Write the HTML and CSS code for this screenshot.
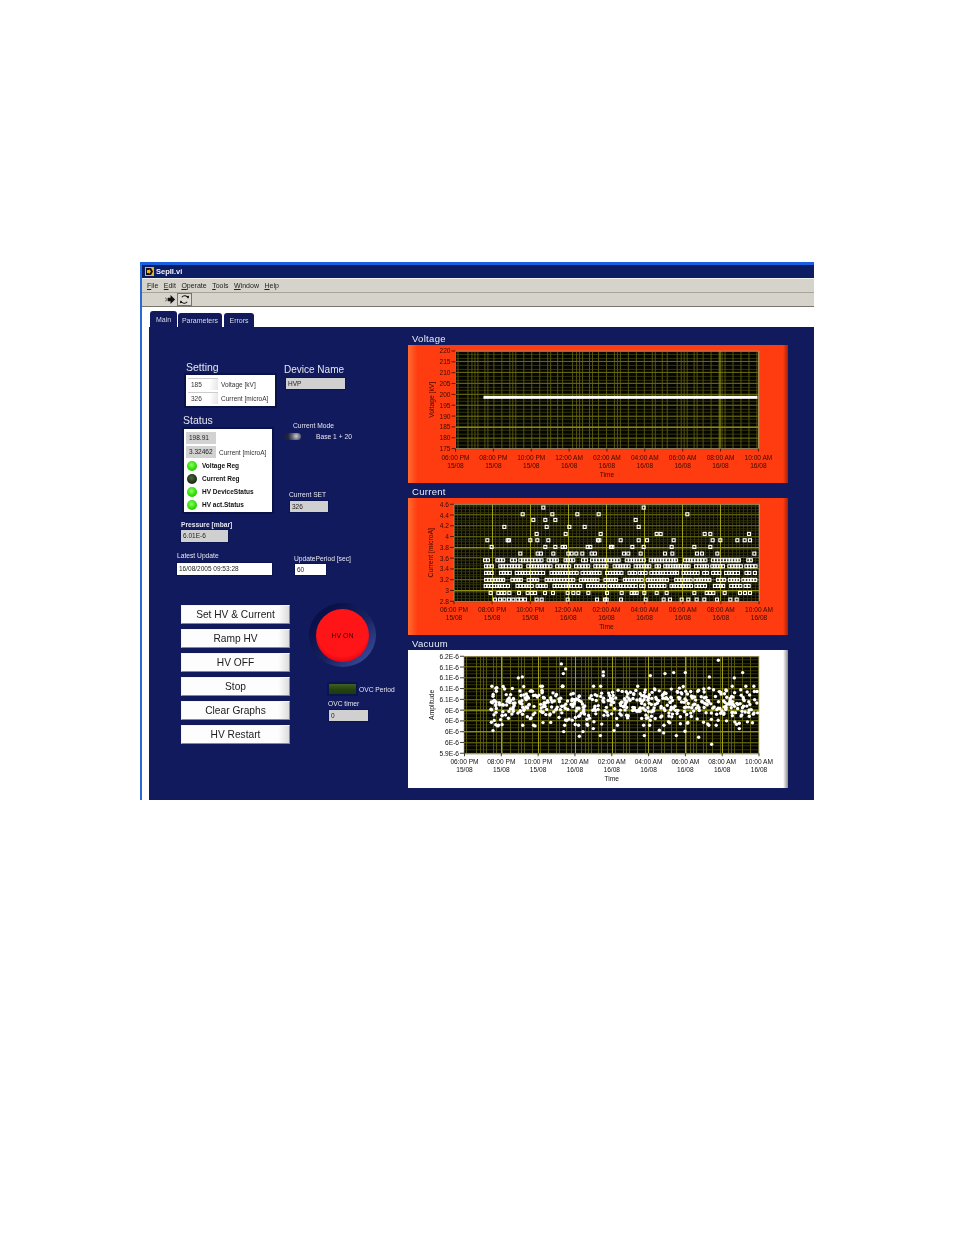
FILE: index.html
```html
<!DOCTYPE html>
<html lang="en">
<head>
<meta charset="utf-8">
<title>SepII.vi</title>
<link rel="stylesheet" href="styles.css">
</head>
<body>
<div class="window">
  <div class="titlebar">
    <svg class="app-icon" viewBox="0 0 9 9"><rect width="9" height="9" fill="#f4b020"/><path d="M1 1h5l2 3.500-2 3.500H1z" fill="#111"/><path d="M2 3h2v-1l2 2.500-2 2.500v-1H2z" fill="#f4b020"/></svg>
    <span>SepII.vi</span>
  </div>
  <div class="menubar">
    <span><u>F</u>ile</span><span><u>E</u>dit</span><span><u>O</u>perate</span><span><u>T</u>ools</span><span><u>W</u>indow</span><span><u>H</u>elp</span>
  </div>
  <div class="toolbar">
    <svg class="tool" viewBox="0 0 12 12"><path d="M3 4h3V1l5 5-5 5V8H3z" fill="#111"/><path d="M0 4.500h1M0 7.500h1M2 4.500v3" stroke="#555" fill="none"/></svg>
    <svg class="tool tool-pressed" viewBox="0 0 12 12"><path d="M3 3.500a4 4 0 0 1 7 1M9 8.500a4 4 0 0 1-7-1" fill="none" stroke="#111" stroke-width="1.100"/><path d="M8 2.500l2.500 2.500.5-3zM4 9.500L1.500 7 1 10z" fill="#111"/></svg>
  </div>
  <div class="tabstrip">
    <div class="tab tab-main">Main</div>
    <div class="tab tab-params">Parameters</div>
    <div class="tab tab-errors">Errors</div>
  </div>
  <div class="panel">
    <div class="controls">
      <div class="upper">
        <div class="col-a">
          <div class="lbl-lg setting-lbl">Setting</div>
          <div class="box setting-box">
            <div class="row"><span class="entry">185</span><span class="cap">Voltage [kV]</span></div>
            <div class="row"><span class="entry">326</span><span class="cap">Current [microA]</span></div>
          </div>
          <div class="lbl-lg status-lbl">Status</div>
          <div class="box status-box">
            <div class="row"><span class="readout">198.91</span></div>
            <div class="row"><span class="readout">3.32462</span><span class="cap">Current [microA]</span></div>
            <div class="led-row"><i class="led on"></i><b>Voltage Reg</b></div>
            <div class="led-row"><i class="led off"></i><b>Current Reg</b></div>
            <div class="led-row"><i class="led on"></i><b>HV DeviceStatus</b></div>
            <div class="led-row"><i class="led on"></i><b>HV act.Status</b></div>
          </div>
          <div class="lbl-sm bold pressure-lbl">Pressure [mbar]</div>
          <div class="field pressure-field">6.01E-6</div>
          <div class="lbl-sm latest-lbl">Latest Update</div>
          <div class="field white latest-field">16/08/2005 09:53:28</div>
        </div>
        <div class="col-b">
          <div class="lbl-lg device-lbl">Device Name</div>
          <div class="field device-field">HVP</div>
          <div class="lbl-sm mode-lbl">Current Mode</div>
          <div class="mode-row">
            <span class="toggle"></span>
            <span class="lbl-sm">Base 1 + 20</span>
          </div>
          <div class="lbl-sm set-lbl">Current SET</div>
          <div class="field set-field">326</div>
          <div class="lbl-sm period-lbl">UpdatePeriod [sec]</div>
          <div class="field white period-field">60</div>
        </div>
      </div>
      <div class="lower">
        <div class="buttons">
          <div class="btn">Set HV &amp; Current</div>
          <div class="btn">Ramp HV</div>
          <div class="btn">HV OFF</div>
          <div class="btn">Stop</div>
          <div class="btn">Clear Graphs</div>
          <div class="btn">HV Restart</div>
        </div>
        <div class="hv-col">
          <div class="hv-ring"><div class="hv-ball">HV ON</div></div>
          <div class="ovc-row"><span class="ovc-led"></span><span class="lbl-sm">OVC Period</span></div>
          <div class="lbl-sm timer-lbl">OVC timer</div>
          <div class="field timer-field">0</div>
        </div>
      </div>
    </div>
    <div class="charts">
      <div class="chart-lbl">Voltage</div>
      <div class="chart orange"><svg id="voltage" viewBox="408 345 380 138"></svg></div>
      <div class="chart-lbl">Current</div>
      <div class="chart orange"><svg id="current" viewBox="408 498 380 137"></svg></div>
      <div class="chart-lbl">Vacuum</div>
      <div class="chart pale"><svg id="vacuum" viewBox="408 650 380 137"></svg></div>
    </div>
  </div>
</div>
<script src="app.js"></script>
</body>
</html>
```
FILE: styles.css
```css
html, body { margin: 0; background: #fff; }
body { height: 1235px; overflow: hidden; font-family: "Liberation Sans", Arial, sans-serif; }

.window {
  box-sizing: border-box;
  margin: 262px 0 0 140px;
  width: 674px;
  height: 538px;
  display: flex;
  flex-direction: column;
  background: #fff;
  border-top: 3px solid #1a5fe0;
  border-left: 2px solid #2a6ad8;
  overflow: hidden;
  filter: blur(.3px);
}

.titlebar {
  height: 13px; flex: none;
  display: flex; align-items: center; gap: 2px;
  padding-left: 3px;
  background: #0d1d63;
  color: #f2f2f8;
  font-size: 7.500px; font-weight: bold;
}
.app-icon { width: 9px; height: 9px; }

.menubar {
  height: 14px; flex: none;
  display: flex; align-items: center; gap: 5.500px;
  padding-left: 5px;
  background: #d6d3cb;
  border-top: 1px solid #f2f0ea;
  box-sizing: border-box;
  color: #222;
  font-size: 7px;
}
.toolbar {
  height: 15px; flex: none;
  display: flex; align-items: center; gap: 1px;
  padding-left: 22px;
  background: #d6d3cb;
  border-top: 1px solid #a8a59c;
  border-bottom: 1px solid #77756d;
  box-sizing: border-box;
}
.tool { width: 11px; height: 11px; padding: 0 1px; }
.tool-pressed { background: #dedbd4; outline: 1px solid #77756d; }

.tabstrip {
  height: 20px; flex: none;
  display: flex; align-items: flex-end;
  padding-left: 7px;
  background: #fff;
  box-sizing: border-box;
}
.tab {
  height: 14px;
  display: flex; align-items: center; justify-content: center;
  background: #101a5c;
  border-radius: 3px 3px 0 0;
  color: #d8d8e8;
  font-size: 7px;
}
.tab-main { width: 27px; height: 16px; margin-left: 1px; }
.tab-params { width: 44px; margin-left: 1px; }
.tab-errors { width: 30px; margin-left: 2px; }

.panel {
  flex: 1;
  margin-left: 7px;
  display: flex;
  background: #101a5c;
  color: #e6e6f0;
}

.controls { width: 259px; flex: none; display: flex; flex-direction: column; }
.upper { display: flex; height: 250px; padding-left: 28px; box-sizing: border-box; }
.col-a { width: 107px; flex: none; display: flex; flex-direction: column; align-items: flex-start; }
.col-b { display: flex; flex-direction: column; align-items: flex-start; }

.lbl-lg { font-size: 10.500px; line-height: 12px; white-space: nowrap; }
.lbl-sm { font-size: 6.700px; line-height: 9px; white-space: nowrap; }
.bold { font-weight: bold; }

.setting-lbl { margin: 34px 0 0 9px; }
.setting-box { margin: 2px 0 0 9px; width: 89px; height: 31px; padding: 2px 0 0 2px; }
.box {
  box-sizing: border-box;
  background: #fff;
  outline: 2px solid #0a1248;
  color: #333;
  font-size: 6.500px;
  display: flex; flex-direction: column;
}
.row { display: flex; align-items: center; gap: 3px; height: 14px; white-space: nowrap; }
.entry {
  width: 30px; height: 12px; line-height: 12px; padding-left: 3px; box-sizing: border-box;
  background: linear-gradient(100deg, #fff 70%, #e4e4e4);
  border-top: 1px solid #ccc;
}
.cap { font-size: 6.500px; color: #333; }

.status-lbl { margin: 8px 0 0 6px; }
.status-box { margin: 3px 0 0 7px; width: 88px; height: 83px; padding: 2px 0 0 2px; }
.readout {
  width: 30px; height: 12px; line-height: 12px; padding-left: 3px; box-sizing: border-box;
  background: #d2d2d2; color: #222;
}
.status-box .row { height: 13.500px; }
.status-box .row:first-child { height: 14.500px; }
.led-row { display: flex; align-items: center; gap: 5px; height: 13px; padding-left: 1px; white-space: nowrap; }
.led-row b { color: #111; font-size: 6.500px; }
.led { width: 10px; height: 10px; border-radius: 50%; flex: none; }
.led.on { background: radial-gradient(circle at 45% 40%, #8cff60, #28d800 60%, #1a9c00); }
.led.off { background: radial-gradient(circle at 45% 40%, #466a3a, #1a2a14 65%, #0c1a08); }

.field {
  box-sizing: border-box;
  background: #d0d0d0;
  color: #222;
  outline: 1px solid #0a1450;
  font-size: 6.500px;
  line-height: 11px;
  padding-left: 2px;
  white-space: nowrap;
}
.white { background: #fff; }

.pressure-lbl { margin: 8px 0 0 4px; }
.pressure-field { margin: 1px 0 0 4px; width: 47px; height: 12px; }
.latest-lbl { margin: 9px 0 0 0; }
.latest-field { margin: 3px 0 0 0; width: 95px; height: 12px; }

.device-lbl { margin: 37px 0 0 0; font-size: 10px; }
.device-field { margin: 2px 0 0 2px; width: 59px; height: 11px; }
.mode-lbl { margin: 32px 0 0 9px; }
.mode-row { display: flex; align-items: center; gap: 15px; margin-top: 2px; height: 9px; padding-left: 1px; }
.toggle {
  width: 16px; height: 7px; border-radius: 4px;
  background: radial-gradient(circle at 70% 45%, #ccc, #667 35%, #223 70%);
}
.set-lbl { margin: 49px 0 0 5px; }
.set-field { margin: 2px 0 0 6px; width: 38px; height: 11px; }
.period-lbl { margin: 42px 0 0 10px; }
.period-field { margin: 1px 0 0 11px; width: 31px; height: 11px; }

.lower { display: flex; padding-left: 32px; padding-top: 28px; }
.buttons { width: 109px; flex: none; display: flex; flex-direction: column; gap: 5.100px; }
.btn {
  box-sizing: border-box;
  height: 19px;
  display: flex; align-items: center; justify-content: center;
  background: linear-gradient(90deg, #fdfdfd 90%, #dcdcdc);
  border: 1px solid #9a9a9a;
  border-color: #f4f4f4 #8a8a8a #8a8a8a #f4f4f4;
  color: #1c1c1c;
  font-size: 10.200px;
}
.hv-col { display: flex; flex-direction: column; align-items: flex-start; margin-left: 19px; margin-top: -2px; }
.hv-ring {
  width: 67px; height: 64px; border-radius: 50%;
  display: flex; align-items: center; justify-content: center;
  background: linear-gradient(135deg, #0a1048 20%, #16225f 55%, #3a4a98 90%);
}
.hv-ball {
  width: 53px; height: 53px; border-radius: 50%;
  display: flex; align-items: center; justify-content: center;
  background: radial-gradient(circle at 50% 42%, #ff1418 62%, #e00010 80%, #a00010);
  color: #300; font-size: 7px;
}
.ovc-row { display: flex; align-items: center; gap: 1px; margin: 15px 0 0 18px; height: 14px; }
.ovc-led {
  width: 31px; height: 14px; box-sizing: border-box;
  border: 2px solid #0a1450;
  background: linear-gradient(#3f6020, #22400f 60%, #1c3a10);
}
.timer-lbl { margin: 3px 0 0 19px; }
.timer-field { margin: 2px 0 0 20px; width: 39px; height: 11px; }

.charts { width: 380px; flex: none; display: flex; flex-direction: column; }
.chart-lbl { height: 13px; line-height: 13px; padding-left: 4px; margin-top: 2px; font-size: 9.500px; letter-spacing: .3px; color: #eceef6; }
.chart-lbl:first-child { margin-top: 5px; }
.chart { height: 137.500px; }
.chart svg { display: block; width: 380px; height: 100%; }
.orange { background: linear-gradient(90deg, #ff6a30 0, #ff3c10 2.500%, #ff3c10 98.700%, #a82008); }
.pale { background: linear-gradient(90deg, #fff 98.700%, #8a8a8a); }
```
FILE: app.js
```js
const NS = "http://www.w3.org/2000/svg";
let seed = 12345;
function rnd() {
  seed = (seed * 1664525 + 1013904223) >>> 0;
  return seed / 4294967296;
}
function gauss() { return (rnd() + rnd() + rnd() + rnd() - 2) / 0.58; }

function el(parent, name, attrs, text) {
  const e = document.createElementNS(NS, name);
  for (const k in attrs) e.setAttribute(k, attrs[k]);
  if (text !== undefined) e.textContent = text;
  parent.appendChild(e);
  return e;
}
function line(p, x1, y1, x2, y2, color, w) {
  el(p, "line", { x1, y1, x2, y2, stroke: color, "stroke-width": w || 1 });
}
const px = v => Math.floor(v) + 0.5;
const TIMES = ["06:00 PM", "08:00 PM", "10:00 PM", "12:00 AM", "02:00 AM", "04:00 AM", "06:00 AM", "08:00 AM", "10:00 AM"];
const DATES = ["15/08", "15/08", "15/08", "16/08", "16/08", "16/08", "16/08", "16/08", "16/08"];
const MINOR = "#35350c", MID = "#6a6a10", MIDV = "#55550e", MAJOR = "#a0a014";

function axes(svg, o) {
  const { x0, x1, y0, y1, ylabels, title, xt, ink } = o;
  el(svg, "rect", { x: x0, y: y0, width: x1 - x0, height: y1 - y0, fill: "#050500" });
  const n = ylabels.length - 1, hs = (y1 - y0) / n, m = 8, vs = (x1 - x0) / m;
  for (let i = 0; i < n * o.hsub; i++) {
    const y = px(y0 + i * hs / o.hsub);
    line(svg, x0, y, x1, y, MINOR);
  }
  for (let i = 0; i < m * o.vsub; i++) {
    const x = px(x0 + i * vs / o.vsub);
    line(svg, x, y0, x, y1, MINOR);
  }
  for (const x of o.midV) line(svg, px(x), y0, px(x), y1, MIDV);
  for (let i = 0; i <= n; i++) line(svg, x0, px(y0 + i * hs), x1, px(y0 + i * hs), MID);
  for (const y of o.majH) line(svg, x0, px(y), x1, px(y), MAJOR);
  for (const x of o.majV) line(svg, px(x), y0, px(x), y1, MAJOR);
  el(svg, "rect", { x: x0, y: y0, width: x1 - x0, height: y1 - y0, fill: "none", stroke: "#b0a090", "stroke-width": .6 });

  ylabels.forEach((t, i) => {
    const y = y0 + i * hs;
    line(svg, x0 - 4, y, x0, y, ink, .8);
    el(svg, "text", { x: x0 - 5, y: y + 2.5, "text-anchor": "end", "font-size": 6.6, fill: ink }, t);
  });
  TIMES.forEach((t, i) => {
    const x = xt + i * (x1 - xt) / 8;
    line(svg, x, y1, x, y1 + 3, ink, .8);
    el(svg, "text", { x, y: y1 + 11, "text-anchor": "middle", "font-size": 6.6, fill: ink }, t);
    el(svg, "text", { x, y: y1 + 19, "text-anchor": "middle", "font-size": 6.6, fill: ink }, DATES[i]);
  });
  el(svg, "text", { x: (xt + x1) / 2, y: y1 + 28, "text-anchor": "middle", "font-size": 6.6, fill: ink }, "Time");
  const ty = (y0 + y1) / 2, tx = o.titleX;
  el(svg, "text", { x: tx, y: ty, "text-anchor": "middle", "font-size": 6.8, fill: ink, transform: `rotate(-90 ${tx} ${ty})` }, title);
}

function pattern(start, end) {
  const offs = [2, 12, 16, 19, 22, 29, 32, 38, 46, 54, 57, 60, 68, 76, 84, 92, 95, 102];
  const out = [];
  for (let base = start; base < end; base += 105) {
    for (const d of offs) if (base + d < end) out.push(base + d);
  }
  return out;
}

/* Voltage */
(function () {
  const svg = document.getElementById("voltage");
  axes(svg, {
    x0: 455, x1: 759, y0: 351, y1: 449, xt: 455, hsub: 3, vsub: 0, midV: pattern(455, 759), majV: [720, 759], majH: [427],
    ylabels: ["220", "215", "210", "205", "200", "195", "190", "185", "180", "175"],
    title: "Voltage [kV]", titleX: 433, ink: "#3a0a00"
  });
  el(svg, "rect", { x: 483, y: 396, width: 275, height: 3, fill: "#fff" });
})();

/* Current */
(function () {
  const svg = document.getElementById("current");
  axes(svg, {
    x0: 454, x1: 759, y0: 504, y1: 601, xt: 454, hsub: 4, vsub: 10,
    midV: [], majV: [492, 530, 568, 606, 644, 682, 720, 759], majH: [547.1, 590.2],
    ylabels: ["4.6", "4.4", "4.2", "4", "3.8", "3.6", "3.4", "3.2", "3", "2.8"],
    title: "Current [microA]", titleX: 433, ink: "#3a0a00"
  });
  const mark = (x, y) => el(svg, "rect", { x: x - 1.5, y: y - 1.5, width: 3, height: 3, fill: "none", stroke: "#fff", "stroke-width": 1.1 });
  const iso = [[415,67],[716,67],[353,87],[442,87],[517,87],[581,87],[847,87],[385,104],[421,104],[451,104],[692,104],[298,125],[425,125],[493,125],[539,125],[701,125],[395,146],[482,146],[587,146],[755,146],[767,146],[899,146],[916,146],[1032,146],[247,165],[308,165],[312,165],[376,165],[397,165],[430,165],[579,165],[583,165],[647,165],[701,165],[726,165],[806,165],[923,165],[946,165],[997,165],[1019,165],[1035,165],[260,185],[421,185],[451,185],[473,185],[480,185],[548,185],[556,185],[618,185],[622,185],[682,185],[716,185],[800,185],[868,185],[916,185],[346,205],[398,205],[408,205],[445,205],[490,205],[500,205],[514,205],[532,205],[560,205],[570,205],[657,205],[670,205],[707,205],[780,205],[802,205],[876,205],[891,205],[937,205],[1048,205],[257,323],[280,323],[290,323],[298,323],[313,323],[342,323],[368,323],[380,323],[390,323],[420,323],[444,323],[488,323],[505,323],[520,323],[550,323],[606,323],[650,323],[680,323],[688,323],[695,323],[718,323],[755,323],[785,323],[868,323],[905,323],[915,323],[925,323],[959,323],[1005,323],[1020,323],[1035,323],[270,343],[285,343],[298,343],[312,343],[325,343],[338,343],[348,343],[360,343],[395,343],[410,343],[488,343],[576,343],[600,343],[605,343],[648,343],[722,343],[776,343],[795,343],[830,343],[850,343],[875,343],[898,343],[936,343],[976,343],[995,343]];
  iso.forEach(([x, y]) => mark(405 + x / 3, 485 + y / 3));
  for (const ry of [225, 243, 263, 284, 302]) {
    let x = 240 + rnd() * 8;
    while (x < 1055) {
      const run = 2 + Math.floor(rnd() * 9);
      for (let i = 0; i < run && x < 1055; i++) { mark(405 + x / 3, 485 + ry / 3); x += 7 + rnd() * 3; }
      x += 5 + rnd() * 16;
    }
  }
})();

/* Vacuum */
(function () {
  const svg = document.getElementById("vacuum");
  axes(svg, {
    x0: 464, x1: 759, y0: 656, y1: 753, xt: 464.5, hsub: 3, vsub: 0, midV: pattern(464, 759),
    majV: [501, 538, 575, 612, 648, 685, 722], majH: [710, 731.500],
    ylabels: ["6.2E-6", "6.1E-6", "6.1E-6", "6.1E-6", "6.1E-6", "6E-6", "6E-6", "6E-6", "6E-6", "5.9E-6"],
    title: "Amplitude", titleX: 434, ink: "#111"
  });
  const dot = (x, y) => el(svg, "circle", { cx: x, cy: y, r: 1.7, fill: "#fff" });
  const iso = [[940,72],[469,83],[482,98],[595,107],[1013,109],[475,112],[806,109],[841,109],[780,112],[595,118],[736,118],[352,122],[340,125],[913,122],[988,125],[920,324],[523,300],[881,303],[718,298],[586,298],[814,298],[264,283],[476,286],[534,286],[627,283],[840,285],[776,290],[1003,277],[390,269],[278,269],[565,277],[763,282]];
  iso.forEach(([x, y]) => dot(405 + x / 3, 636 + y / 3));
  for (let i = 0; i < 520; i++) {
    const x = 491 + rnd() * 267;
    let g = gauss() * 10.5;
    g = Math.max(-19, Math.min(20, g));
    dot(x, 705 + g);
  }
})();
```
